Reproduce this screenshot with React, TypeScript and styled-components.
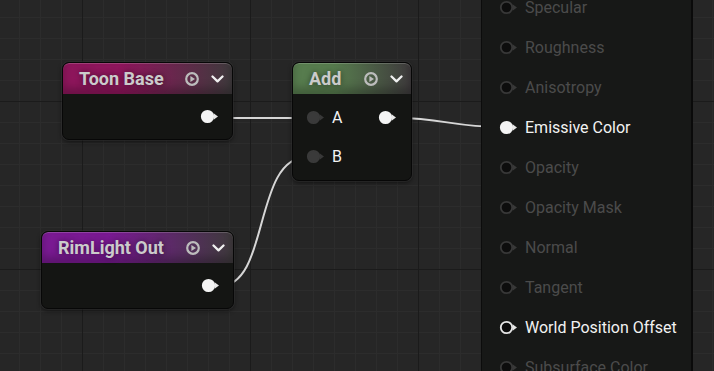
import React from 'react';
import styled, {createGlobalStyle} from 'styled-components';

const GlobalStyle = createGlobalStyle`
  html, body {
    margin: 0;
    padding: 0;
    background: #262626;
    font-family: Roboto, "Liberation Sans", sans-serif;
  }
`;

const Canvas = styled.div`
  position: relative;
  width: 714px;
  height: 371px;
  overflow: hidden;
  background-color: #262626;
  background-image:
    linear-gradient(to right, #1b1b1b 1px, transparent 1px),
    linear-gradient(to bottom, #1b1b1b 1px, transparent 1px),
    linear-gradient(to right, #2c2c2c 1px, transparent 1px),
    linear-gradient(to bottom, #2c2c2c 1px, transparent 1px);
  background-size: 168px 168px, 168px 168px, 21px 21px, 21px 21px;
  background-position: 82px 101px, 82px 101px, 19px 17px, 19px 17px;
`;

const Wires = styled.svg`
  position: absolute;
  left: 0;
  top: 0;
`;

const Node = styled.div<{ $x: number; $y: number; $w: number }>`
  position: absolute;
  left: ${p => p.$x}px;
  top: ${p => p.$y}px;
  width: ${p => p.$w}px;
  box-sizing: border-box;
  border: 1px solid #070707;
  border-radius: 7px;
  background: #141513;
  box-shadow: 0 0 0 1px rgba(60, 60, 60, 0.35), 0 2px 4px rgba(0, 0, 0, 0.5);
  overflow: hidden;
  display: flex;
  flex-direction: column;
`;

const Header = styled.div<{ $color: string }>`
  height: 31px;
  display: flex;
  align-items: center;
  padding: 0 8px 0 16px;
  background: linear-gradient(to right, ${p => p.$color} 0%, ${p => p.$color} 35%, #3e3a3c 100%);
  box-shadow: inset 0 1px 0 rgba(255, 255, 255, 0.18), inset 0 -6px 8px rgba(0, 0, 0, 0.25);
  border-radius: 6px 6px 0 0;
`;

const Title = styled.span`
  flex: 1;
  font-size: 18px;
  font-weight: 700;
  color: #cbcbcb;
  text-shadow: 0 0 6px rgba(0, 0, 0, 0.55);
  white-space: nowrap;
`;

const HeaderIcons = styled.div`
  display: flex;
  align-items: center;
  gap: 12px;
`;

const Body = styled.div<{ $h: number; $pad?: string }>`
  height: ${p => p.$h}px;
  display: flex;
  flex-direction: column;
  justify-content: center;
  padding: ${p => p.$pad ?? '0 11px 0 13px'};
`;

const PinRow = styled.div<{ $h?: number; $end?: boolean }>`
  height: ${p => p.$h ?? 39}px;
  display: flex;
  align-items: center;
  justify-content: ${p => (p.$end ? 'flex-end' : 'space-between')};
`;

const PinSide = styled.div`
  display: flex;
  align-items: center;
  gap: 5px;
`;

const PinLabel = styled.span<{ $active?: boolean }>`
  font-size: 16px;
  color: ${p => (p.$active ? '#f2f2f2' : '#4b4b4b')};
  white-space: nowrap;
`;

const ResultPanel = styled.div`
  position: absolute;
  left: 481px;
  top: -33px;
  width: 212px;
  height: 430px;
  box-sizing: border-box;
  background: #171817;
  border-left: 1px solid #0c0c0c;
  border-right: 2px solid #0a0a0a;
  padding: 20px 0 0 17px;
  display: flex;
  flex-direction: column;
`;

const ResultRow = styled.div`
  height: 40px;
  display: flex;
  align-items: center;
  gap: 5px;
`;

type PinKind = 'on' | 'off' | 'ring' | 'grey';

const Pin = ({kind}: { kind: PinKind }) => {
	const fill = kind === 'on' ? '#f4f4f4' : kind === 'grey' ? '#3a3a3a' : '#0d0d0d';
	const stroke = kind === 'on' ? '#f4f4f4' : kind === 'ring' ? '#e6e6e6' : kind === 'grey' ? '#3a3a3a' : '#383838';
	const tri = kind === 'on' ? '#e8e8e8' : kind === 'ring' ? '#e6e6e6' : '#383838';
	return (
		<svg width="21" height="15" viewBox="0 0 21 15">
			<circle cx="7.5" cy="7.5" r="5.7" fill={fill} stroke={stroke} strokeWidth="1.8" />
			<path d="M13.6 4.3 L18 7.5 L13.6 10.7 Z" fill={tri} />
		</svg>
	);
};

const PlayIcon = () => (
	<svg width="14" height="14" viewBox="0 0 14 14">
		<circle cx="7" cy="7" r="5.8" fill="none" stroke="#bcbcbc" strokeWidth="2.2" />
		<path d="M5.4 4 L10 7 L5.4 10 Z" fill="#bcbcbc" />
	</svg>
);

const Chevron = () => (
	<svg width="13" height="8" viewBox="0 0 13 8">
		<path d="M1.5 1.5 L6.5 6.3 L11.5 1.5" fill="none" stroke="#f0f0f0" strokeWidth="2.3" strokeLinecap="round" strokeLinejoin="round" />
	</svg>
);

const NodeHeader = ({title, color}: { title: string; color: string }) => (
	<Header $color={color}>
		<Title>{title}</Title>
		<HeaderIcons>
			<PlayIcon />
			<Chevron />
		</HeaderIcons>
	</Header>
);

const resultPins: { label: string; kind: PinKind }[] = [
	{label: 'Specular', kind: 'off'},
	{label: 'Roughness', kind: 'off'},
	{label: 'Anisotropy', kind: 'off'},
	{label: 'Emissive Color', kind: 'on'},
	{label: 'Opacity', kind: 'off'},
	{label: 'Opacity Mask', kind: 'off'},
	{label: 'Normal', kind: 'off'},
	{label: 'Tangent', kind: 'off'},
	{label: 'World Position Offset', kind: 'ring'},
	{label: 'Subsurface Color', kind: 'off'},
];

export default function App() {
	return (
		<>
			<GlobalStyle />
			<Canvas>
				<Wires width="714" height="371">
					<g fill="none" stroke="#d6d6d6" strokeWidth="2">
						<path d="M219 118 L307 118" />
						<path d="M398 118 C 440 118, 455 127, 500 127" />
						<path d="M220 286 C 270 286, 253 157, 307 157" />
					</g>
				</Wires>

				<Node $x={62} $y={62} $w={171}>
					<NodeHeader title="Toon Base" color="#8e165c" />
					<Body $h={45}>
						<PinRow $h={45} $end>
							<Pin kind="on" />
						</PinRow>
					</Body>
				</Node>

				<Node $x={292} $y={62} $w={120}>
					<NodeHeader title="Add" color="#577c4e" />
					<Body $h={86} $pad="0 12px 0 13px">
						<PinRow>
							<PinSide>
								<Pin kind="grey" />
								<PinLabel $active>A</PinLabel>
							</PinSide>
							<Pin kind="on" />
						</PinRow>
						<PinRow>
							<PinSide>
								<Pin kind="grey" />
								<PinLabel $active>B</PinLabel>
							</PinSide>
						</PinRow>
					</Body>
				</Node>

				<Node $x={41} $y={231} $w={193}>
					<NodeHeader title="RimLight Out" color="#7a1a93" />
					<Body $h={45}>
						<PinRow $h={45} $end>
							<Pin kind="on" />
						</PinRow>
					</Body>
				</Node>

				<ResultPanel>
					{resultPins.map(p => (
						<ResultRow key={p.label}>
							<Pin kind={p.kind} />
							<PinLabel $active={p.kind !== 'off'}>{p.label}</PinLabel>
						</ResultRow>
					))}
				</ResultPanel>
			</Canvas>
		</>
	);
}
